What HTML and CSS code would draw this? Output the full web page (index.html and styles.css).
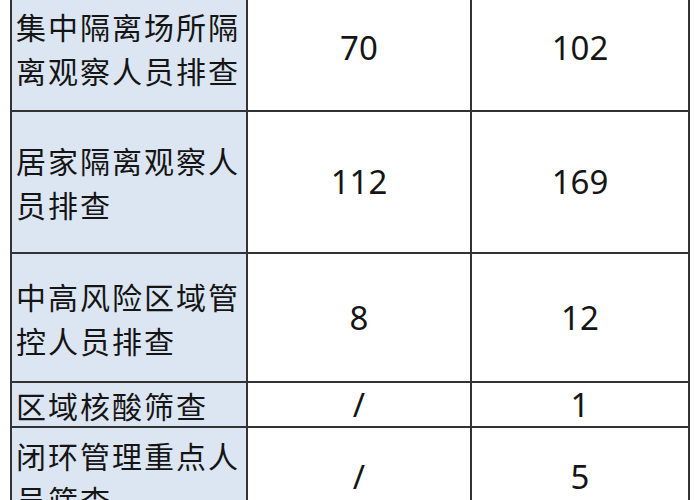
FILE: index.html
```html
<!DOCTYPE html>
<html lang="zh-CN">
<head>
<meta charset="utf-8">
<title>排查统计</title>
<link rel="stylesheet" href="styles.css">
</head>
<body>
<div class="sheet">
  <div class="cell label">集中隔离场所隔离观察人员排查</div>
  <div class="cell num">70</div>
  <div class="cell num">102</div>

  <div class="cell label">居家隔离观察人员排查</div>
  <div class="cell num">112</div>
  <div class="cell num">169</div>

  <div class="cell label">中高风险区域管控人员排查</div>
  <div class="cell num">8</div>
  <div class="cell num">12</div>

  <div class="cell label">区域核酸筛查</div>
  <div class="cell num">/</div>
  <div class="cell num">1</div>

  <div class="cell label">闭环管理重点人员筛查</div>
  <div class="cell num">/</div>
  <div class="cell num">5</div>
</div>
</body>
</html>
```

FILE: styles.css
```css
html, body {
  margin: 0;
  padding: 0;
  background: #ffffff;
  overflow: hidden;
}

.sheet {
  display: grid;
  grid-template-columns: 236px 224px 218px;
  grid-template-rows: 127px 142px 129px 45px 100px;
  width: 680px;
  box-sizing: border-box;
  margin: -17px 0 0 10px;
  border-top: 2px solid #333333;
  border-left: 2px solid #333333;
  color: #151515;
}

.cell {
  box-sizing: border-box;
  border-right: 2px solid #333333;
  border-bottom: 2px solid #333333;
  display: flex;
  align-items: center;
}

.label {
  background: #dce6f2;
  font-family: "Noto Sans CJK SC", sans-serif;
  font-size: 30px;
  line-height: 44px;
  letter-spacing: 2px;
  padding-left: 4px;
}

.num {
  justify-content: center;
  font-family: "Noto Sans", "Open Sans", sans-serif;
  font-size: 33px;
  line-height: 44px;
}
```
